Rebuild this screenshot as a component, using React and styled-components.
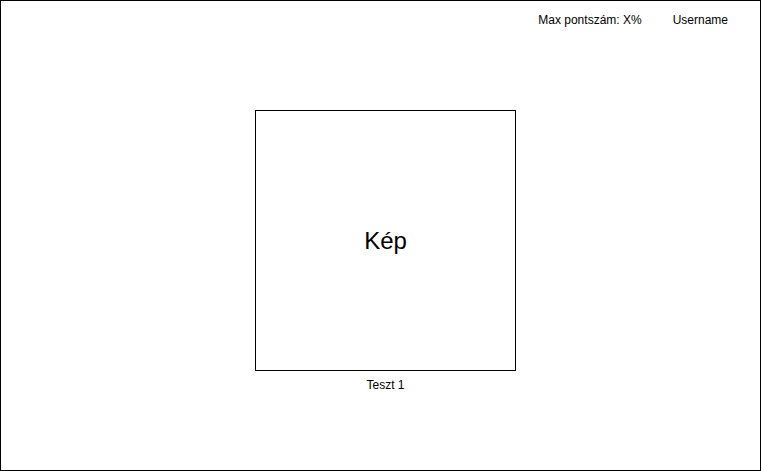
import React from "react";
import styled, { createGlobalStyle } from "styled-components";

const Global = createGlobalStyle`
  html, body { margin: 0; padding: 0; background: #fff; }
  * { box-sizing: border-box; }
`;

const Page = styled.div`
  width: 761px;
  height: 471px;
  border: 1px solid #000;
  background: #fff;
  font-family: "Liberation Sans", Arial, sans-serif;
  color: #000;
  display: flex;
  flex-direction: column;
`;

const Header = styled.header`
  height: 37px;
  display: flex;
  align-items: center;
  justify-content: flex-end;
  gap: 31px;
  padding-right: 32px;
  font-size: 12px;
  line-height: 14px;
`;

const Item = styled.span`
  white-space: nowrap;
`;

const Figure = styled.figure`
  margin: 72px 0 0 254px;
  width: 261px;
  display: flex;
  flex-direction: column;
  align-items: center;
`;

const ImageBox = styled.div`
  width: 261px;
  height: 261px;
  border: 1px solid #000;
  display: flex;
  align-items: center;
  justify-content: center;
  font-size: 24px;
  line-height: 28px;
`;

const Caption = styled.figcaption`
  margin-top: 7px;
  font-size: 12px;
  line-height: 14px;
`;

export default function App() {
  return (
    <>
      <Global />
      <Page>
        <Header>
          <Item>Max pontszám: X%</Item>
          <Item>Username</Item>
        </Header>
        <Figure>
          <ImageBox>Kép</ImageBox>
          <Caption>Teszt 1</Caption>
        </Figure>
      </Page>
    </>
  );
}
